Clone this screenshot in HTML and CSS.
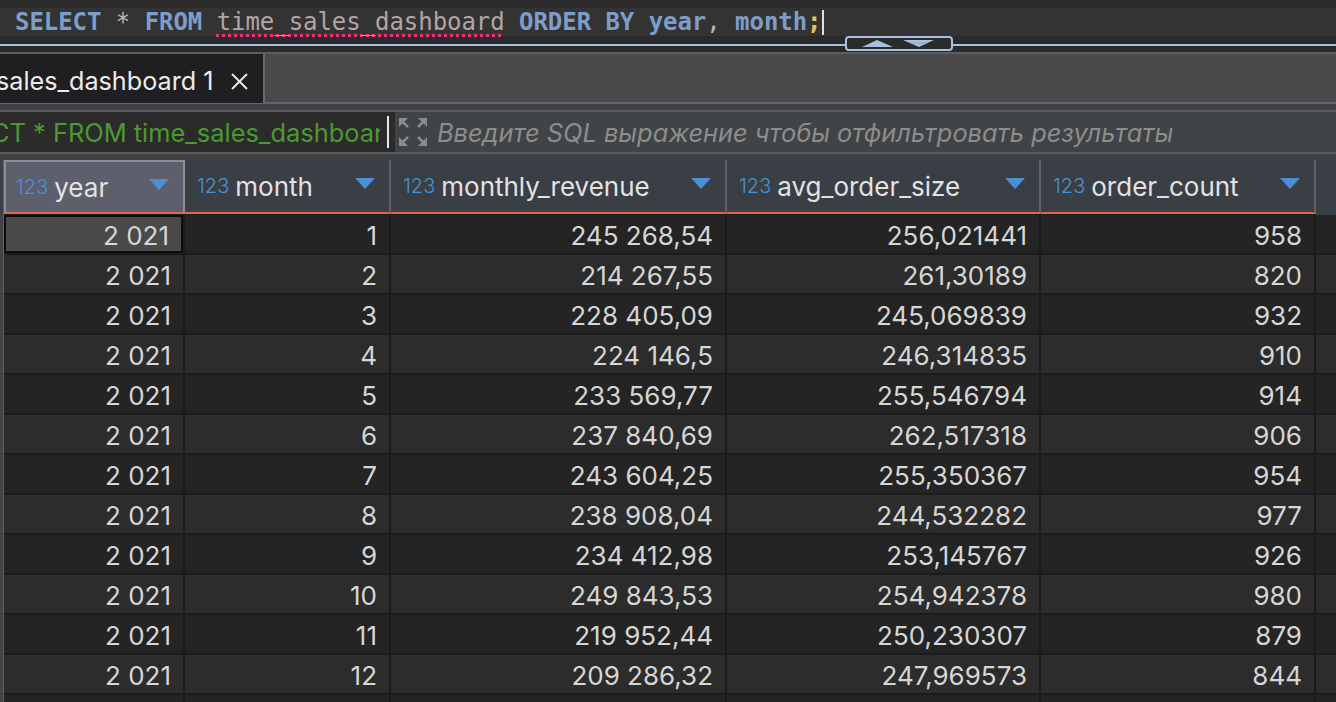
FILE: index.html
```html
<!DOCTYPE html>
<html lang="ru">
<head>
<meta charset="utf-8">
<title>time_sales_dashboard</title>
<link rel="stylesheet" href="styles.css">
</head>
<body>
<div class="editor">
  <div class="code-line"><span class="kw">SELECT</span> <span class="op">*</span> <span class="kw">FROM</span> <span class="tbl">time_sales_dashboard</span> <span class="kw">ORDER BY</span> <span class="kw">year</span><span class="op">,</span> <span class="kw">month</span><span class="semi">;</span><span class="caret"></span></div>
</div>
<div class="splitter">
  <div class="toggle">
    <svg width="108" height="15" viewBox="0 0 108 15">
      <polygon points="17,11 32,4 48,11" fill="#a9bfdf"/>
      <polygon points="58,4 89,4 74,11" fill="#a9bfdf"/>
      <line x1="66" y1="7" x2="82" y2="7" stroke="#8aa0c0" stroke-width="0.8"/>
    </svg>
  </div>
</div>
<div class="tabbar">
  <div class="tab">
    <span class="tab-title">sales_dashboard 1</span>
    <svg class="tab-close" width="17" height="17" viewBox="0 0 17 17"><path d="M1 1 L16 16 M16 1 L1 16" stroke="#e6e6e6" stroke-width="2"/></svg>
  </div>
</div>
<div class="filterbar">
  <div class="filter">
    <div class="filter-input"><span class="filter-text">CT * FROM time_sales_dashboard ORDER BY year, month</span><span class="filter-caret"></span></div>
    <svg class="expand" width="30" height="30" viewBox="0 0 30 30">
      <g fill="#8b8b8b">
        <polygon points="1,1 10,1 1,10"/>
        <polygon points="29,1 20,1 29,10"/>
        <polygon points="1,29 10,29 1,20"/>
        <polygon points="29,29 20,29 29,20"/>
      </g>
      <g stroke="#8b8b8b" stroke-width="2.5">
        <line x1="4" y1="4" x2="10" y2="10"/>
        <line x1="26" y1="4" x2="20" y2="10"/>
        <line x1="4" y1="26" x2="10" y2="20"/>
        <line x1="26" y1="26" x2="20" y2="20"/>
      </g>
    </svg>
    <span class="placeholder">Введите SQL выражение чтобы отфильтровать результаты</span>
  </div>
</div>
<div class="grid">
  <div class="row head">
    <div class="lead"></div>
    <div class="hcell selected"><span class="type">123</span><span class="name">year</span><span class="tri"></span></div>
    <div class="hcell"><span class="type">123</span><span class="name">month</span><span class="tri"></span></div>
    <div class="hcell"><span class="type">123</span><span class="name">monthly_revenue</span><span class="tri"></span></div>
    <div class="hcell"><span class="type">123</span><span class="name">avg_order_size</span><span class="tri"></span></div>
    <div class="hcell"><span class="type">123</span><span class="name">order_count</span><span class="tri"></span></div>
    <div class="hcell filler"></div>
  </div>
  <div class="row odd"><div class="lead"></div><div class="cell current">2 021</div><div class="cell">1</div><div class="cell">245 268,54</div><div class="cell">256,021441</div><div class="cell">958</div><div class="cell filler"></div></div>
  <div class="row even"><div class="lead"></div><div class="cell">2 021</div><div class="cell">2</div><div class="cell">214 267,55</div><div class="cell">261,30189</div><div class="cell">820</div><div class="cell filler"></div></div>
  <div class="row odd"><div class="lead"></div><div class="cell">2 021</div><div class="cell">3</div><div class="cell">228 405,09</div><div class="cell">245,069839</div><div class="cell">932</div><div class="cell filler"></div></div>
  <div class="row even"><div class="lead"></div><div class="cell">2 021</div><div class="cell">4</div><div class="cell">224 146,5</div><div class="cell">246,314835</div><div class="cell">910</div><div class="cell filler"></div></div>
  <div class="row odd"><div class="lead"></div><div class="cell">2 021</div><div class="cell">5</div><div class="cell">233 569,77</div><div class="cell">255,546794</div><div class="cell">914</div><div class="cell filler"></div></div>
  <div class="row even"><div class="lead"></div><div class="cell">2 021</div><div class="cell">6</div><div class="cell">237 840,69</div><div class="cell">262,517318</div><div class="cell">906</div><div class="cell filler"></div></div>
  <div class="row odd"><div class="lead"></div><div class="cell">2 021</div><div class="cell">7</div><div class="cell">243 604,25</div><div class="cell">255,350367</div><div class="cell">954</div><div class="cell filler"></div></div>
  <div class="row even"><div class="lead"></div><div class="cell">2 021</div><div class="cell">8</div><div class="cell">238 908,04</div><div class="cell">244,532282</div><div class="cell">977</div><div class="cell filler"></div></div>
  <div class="row odd"><div class="lead"></div><div class="cell">2 021</div><div class="cell">9</div><div class="cell">234 412,98</div><div class="cell">253,145767</div><div class="cell">926</div><div class="cell filler"></div></div>
  <div class="row even"><div class="lead"></div><div class="cell">2 021</div><div class="cell">10</div><div class="cell">249 843,53</div><div class="cell">254,942378</div><div class="cell">980</div><div class="cell filler"></div></div>
  <div class="row odd"><div class="lead"></div><div class="cell">2 021</div><div class="cell">11</div><div class="cell">219 952,44</div><div class="cell">250,230307</div><div class="cell">879</div><div class="cell filler"></div></div>
  <div class="row even"><div class="lead"></div><div class="cell">2 021</div><div class="cell">12</div><div class="cell">209 286,32</div><div class="cell">247,969573</div><div class="cell">844</div><div class="cell filler"></div></div>
  <div class="row odd"><div class="lead"></div><div class="cell"></div><div class="cell"></div><div class="cell"></div><div class="cell"></div><div class="cell"></div><div class="cell filler"></div></div>
</div>
</body>
</html>
```

FILE: styles.css
```css
html, body {
  margin: 0;
  padding: 0;
}
body {
  width: 1336px;
  height: 702px;
  overflow: hidden;
  background: #2b2b2b;
  font-family: Inter, "Noto Sans", sans-serif;
  color: #d6d6d6;
}

/* SQL editor line */
.editor {
  height: 44px;
  padding-top: 8px;
  box-sizing: border-box;
  background: #2a2a2a;
}
.code-line {
  height: 28px;
  background: #333333;
  padding-left: 15px;
  font-family: "DejaVu Sans Mono", "Liberation Mono", monospace;
  font-size: 24px;
  letter-spacing: -0.05px;
  line-height: 28px;
  white-space: pre;
  color: #b8b8b8;
}
.kw { color: #7c9ec9; font-weight: bold; }
.op { color: #b8b8b8; }
.tbl {
  color: #b5a4a4;
  text-decoration: underline dotted #e8347f;
  text-decoration-thickness: 3px;
  text-underline-offset: 4px;
}
.semi { color: #e2c35e; font-weight: bold; }
.caret {
  display: inline-block;
  width: 2px;
  height: 25px;
  margin-left: 1px;
  vertical-align: -5px;
  background: #e0e0e0;
}

/* splitter */
.splitter {
  height: 2px;
  background: #a9bfdf;
  position: relative;
}
.toggle {
  position: absolute;
  left: 845px;
  top: -8px;
  width: 108px;
  height: 15px;
  box-sizing: border-box;
  border: 2px solid #a9bfdf;
  border-radius: 4px;
  background: #2b2b2b;
  overflow: hidden;
}
.toggle svg { display: block; margin: -2px 0 0 -2px; }

/* tabs */
.tabbar {
  margin-top: 6px;
  border-top: 2px solid #5e5e5e;
  height: 48px;
  background: #4a494c;
  display: flex;
}
.tab {
  width: 265px;
  height: 49px;
  box-sizing: border-box;
  padding-top: 5px;
  background: #1f1f21;
  border-right: 2px solid #6a6a6a;
  display: flex;
  align-items: center;
  overflow: hidden;
}
.tab-title {
  margin-left: -4px;
  font-size: 25.2px;
  color: #ececec;
  white-space: nowrap;
}
.tab-close { margin-left: 17px; flex: none; }

/* filter */
.filterbar {
  border-top: 2px solid #646567;
  padding: 6px 0;
  background: #3f4244;
}
.filter {
  height: 40px;
  border-top: 2px solid #585b5e;
  border-bottom: 2px solid #585b5e;
  background: #404447;
  display: flex;
  align-items: center;
}
.filter-input {
  width: 395px;
  height: 40px;
  flex: none;
  background: #2b2b2b;
  overflow: hidden;
  display: flex;
  align-items: center;
}
.filter-text {
  margin-left: -9px;
  width: 389px;
  flex: none;
  overflow: hidden;
  white-space: nowrap;
  font-size: 25.4px;
  color: #4b9a2f;
}
.filter-caret {
  width: 2px;
  height: 32px;
  flex: none;
  background: #e8e8e8;
  margin-left: 7px;
}
.expand { flex: none; margin-left: 3px; }
.placeholder {
  margin-left: 9px;
  font-size: 25.4px;
  font-style: italic;
  color: #8d8d8d;
  white-space: nowrap;
}

/* grid */
.row {
  display: grid;
  grid-template-columns: 4px 181px 206px 336px 314px 275px 1fr;
}
.row.head {
  height: 55px;
  background: #1c1c1c;
}
.lead {
  background: #404347;
  border-right: 1px solid #5f6266;
}
.head .lead { background: #3d4046; }
.hcell {
  height: 54px;
  box-sizing: border-box;
  background: #3a3f46;
  border-right: 2px solid #5e6165;
  border-bottom: 2px solid #e2654d;
  display: flex;
  align-items: center;
  padding: 0 14px 0 12px;
}
.hcell.selected {
  background: #5e5f6d;
  border: 2px solid #8c8d95;
  border-bottom: 2px solid #e2654d;
  padding-left: 10px;
}
.hcell.filler {
  border-bottom: none;
  height: 55px;
}
.type {
  font-size: 20px;
  font-weight: 300;
  color: #4b8fd6;
  margin-right: 6px;
}
.name {
  font-size: 26px;
  color: #e2e2e2;
  flex: 1;
  white-space: nowrap;
}
.tri {
  width: 0;
  height: 0;
  border-left: 10px solid transparent;
  border-right: 10px solid transparent;
  border-top: 11px solid #4b8fd6;
  margin-top: -6px;
}
.cell {
  height: 40px;
  box-sizing: border-box;
  border-right: 2px solid #1b1b1b;
  border-bottom: 2px solid #1b1b1b;
  padding-right: 12px;
  text-align: right;
  font-size: 26px;
  line-height: 41px;
  color: #d6d6d6;
  white-space: nowrap;
  overflow: hidden;
}
.odd .cell { background: #242424; }
.even .cell { background: #2c2c2c; }
.cell.filler { border-right: none; }
.odd .cell.current {
  background: #4a4a4a;
  box-shadow: inset 0 0 0 2px #0e0e0e;
  border-right-color: #1b1b1b;
  padding-right: 14px;
}
```
